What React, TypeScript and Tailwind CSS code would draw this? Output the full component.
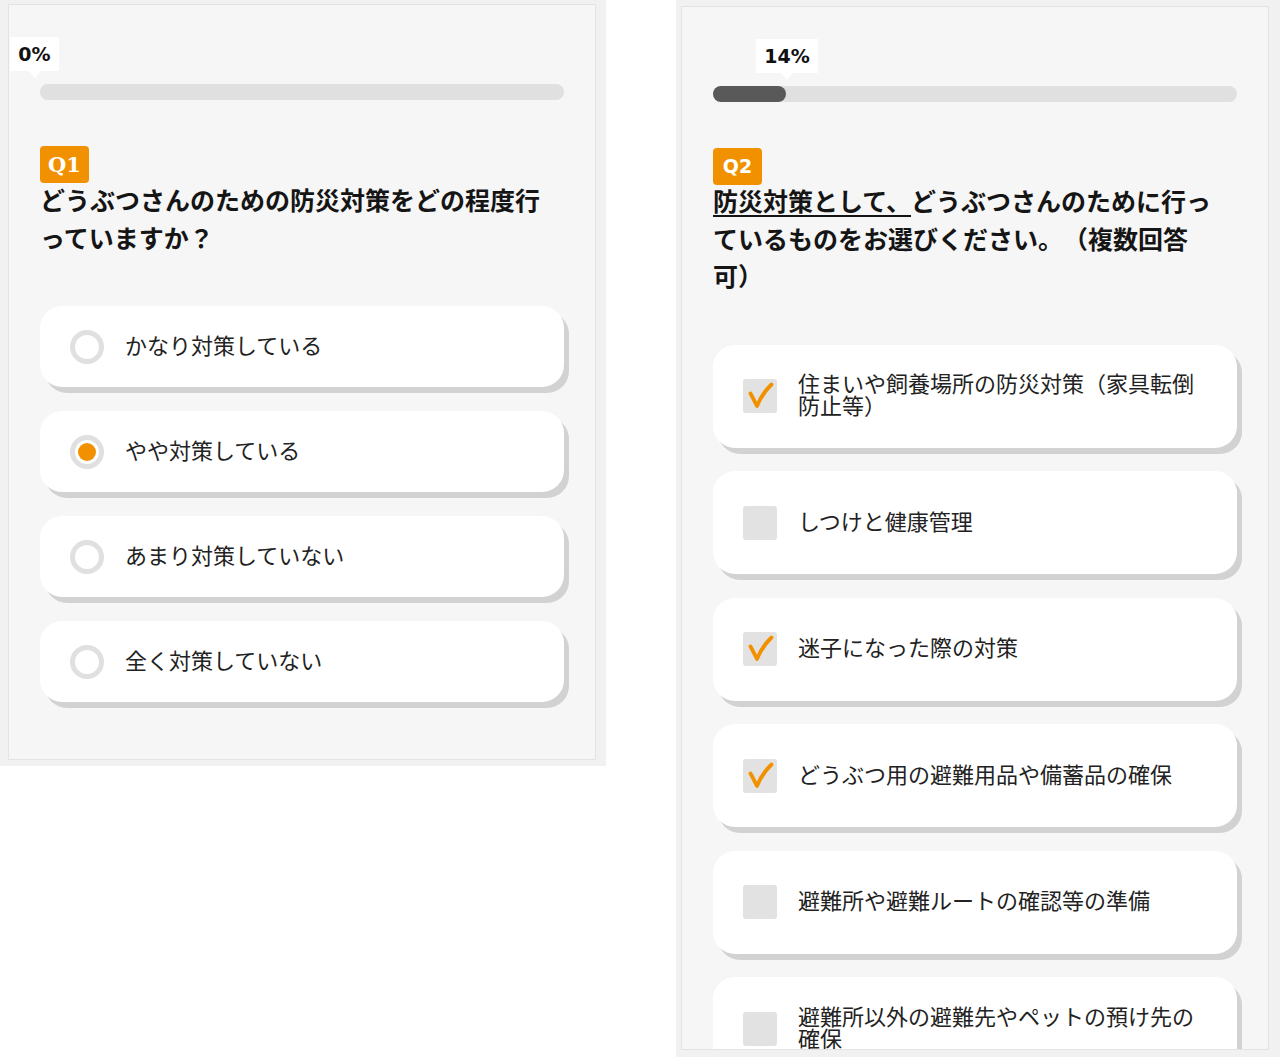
import React from "react";

const jp = "font-['Noto_Sans_CJK_JP',sans-serif] [text-spacing-trim:space-all]";

const Tooltip: React.FC<{ label: string; className: string }> = ({ label, className }) => (
  <div
    className={`absolute top-[32px] h-[34px] bg-white flex items-center justify-center font-['DejaVu_Sans',sans-serif] font-bold text-[19px] text-[#111] ${className}`}
  >
    {label}
    <span className="absolute top-full left-1/2 -translate-x-1/2 border-x-[6px] border-x-transparent border-t-[7px] border-t-white" />
  </div>
);

const Radio: React.FC<{ checked?: boolean }> = ({ checked }) => (
  <span className="w-[34px] h-[34px] shrink-0 rounded-full border-[5px] border-[#e0e0e0] bg-white flex items-center justify-center">
    {checked && <span className="w-[18px] h-[18px] rounded-full bg-[#f29100]" />}
  </span>
);

const CheckBox: React.FC<{ checked?: boolean }> = ({ checked }) => (
  <span className="w-[34px] h-[34px] shrink-0 rounded-[3px] bg-[#e2e2e2] flex items-center justify-center">
    {checked && (
      <svg viewBox="0 0 34 34" className="w-[34px] h-[34px]">
        <path
          d="M7.5 14.5 C9.5 18 11.5 22 14 27 C17.5 18.5 22.5 11 28.5 5.5"
          fill="none"
          stroke="#f29100"
          strokeWidth="3.8"
          strokeLinecap="round"
          strokeLinejoin="round"
        />
      </svg>
    )}
  </span>
);

const q1Options = [
  { label: "かなり対策している", checked: false },
  { label: "やや対策している", checked: true },
  { label: "あまり対策していない", checked: false },
  { label: "全く対策していない", checked: false },
];

const q2Options: { lines: string[]; checked: boolean }[] = [
  { lines: ["住まいや飼養場所の防災対策（家具転倒", "防止等）"], checked: true },
  { lines: ["しつけと健康管理"], checked: false },
  { lines: ["迷子になった際の対策"], checked: true },
  { lines: ["どうぶつ用の避難用品や備蓄品の確保"], checked: true },
  { lines: ["避難所や避難ルートの確認等の準備"], checked: false },
  { lines: ["避難所以外の避難先やペットの預け先の", "確保"], checked: false },
];

export default function App() {
  return (
    <div className={`flex items-start gap-[70px] bg-white w-[1280px] h-[1057px] ${jp}`}>
      {/* Q1 */}
      <div className="w-[606px] h-[766px] bg-[#f1f1f1] pl-[8px] pt-[4px]">
        <div className="w-[588px] h-[756px] border border-[#e3e3e3] bg-[#f6f6f6] px-[31px] overflow-hidden">
          <div className="relative pt-[79px]">
            <Tooltip label="0%" className="left-[-30px] w-[49px]" />
            <div className="h-[16px] rounded-full bg-[#e0e0e0]" />
          </div>

          <div className="mt-[46px] w-[49px] h-[37px] rounded-[4px] bg-[#f29100] text-white font-['DejaVu_Serif',serif] font-bold text-[21px] flex items-center justify-center">
            Q1
          </div>
          <h2 className="-mt-[3px] text-[25px] leading-[38px] font-bold text-[#151515]">
            どうぶつさんのための防災対策をどの程度行
            <br />
            っていますか？
          </h2>

          <div className="mt-[50px] flex flex-col gap-[24px]">
            {q1Options.map((o) => (
              <div
                key={o.label}
                className="h-[81px] bg-white rounded-[22px] shadow-[5px_6px_0_#d2d2d2] flex items-center pl-[30px] gap-[21px]"
              >
                <Radio checked={o.checked} />
                <span className="pb-[5px] text-[22px] text-[#222]">{o.label}</span>
              </div>
            ))}
          </div>
        </div>
      </div>

      {/* Q2 */}
      <div className="w-[604px] h-[1057px] bg-[#f1f1f1] pl-[5px] pt-[6px]">
        <div className="w-[588px] h-[1044px] border border-[#e3e3e3] bg-[#f6f6f6] px-[31px] overflow-hidden">
          <div className="relative pt-[79px]">
            <Tooltip label="14%" className="left-[43px] w-[62px]" />
            <div className="h-[16px] rounded-full bg-[#e0e0e0]">
              <div className="h-full w-[14%] rounded-full bg-[#595959]" />
            </div>
          </div>

          <div className="mt-[46px] w-[49px] h-[37px] rounded-[4px] bg-[#f29100] text-white font-['DejaVu_Sans',sans-serif] font-bold text-[19px] flex items-center justify-center">
            Q2
          </div>
          <h2 className="-mt-[3px] text-[25px] leading-[37.5px] font-bold text-[#151515]">
            <span className="underline decoration-[2px] underline-offset-[4px]">防災対策として、</span>
            どうぶつさんのために行っ
            <br />
            ているものをお選びください。（複数回答
            <br />
            可）
          </h2>

          <div className="mt-[50px] flex flex-col gap-[23.6px]">
            {q2Options.map((o) => (
              <div
                key={o.lines[0]}
                className="h-[103px] shrink-0 bg-white rounded-[22px] shadow-[5px_6px_0_#d2d2d2] flex items-center pl-[30px] gap-[21px]"
              >
                <CheckBox checked={o.checked} />
                <span className="pb-[6px] text-[22px] leading-[22px] text-[#222]">
                  {o.lines.map((l, i) => (
                    <React.Fragment key={l}>
                      {i > 0 && <br />}
                      {l}
                    </React.Fragment>
                  ))}
                </span>
              </div>
            ))}
          </div>
        </div>
      </div>
    </div>
  );
}
